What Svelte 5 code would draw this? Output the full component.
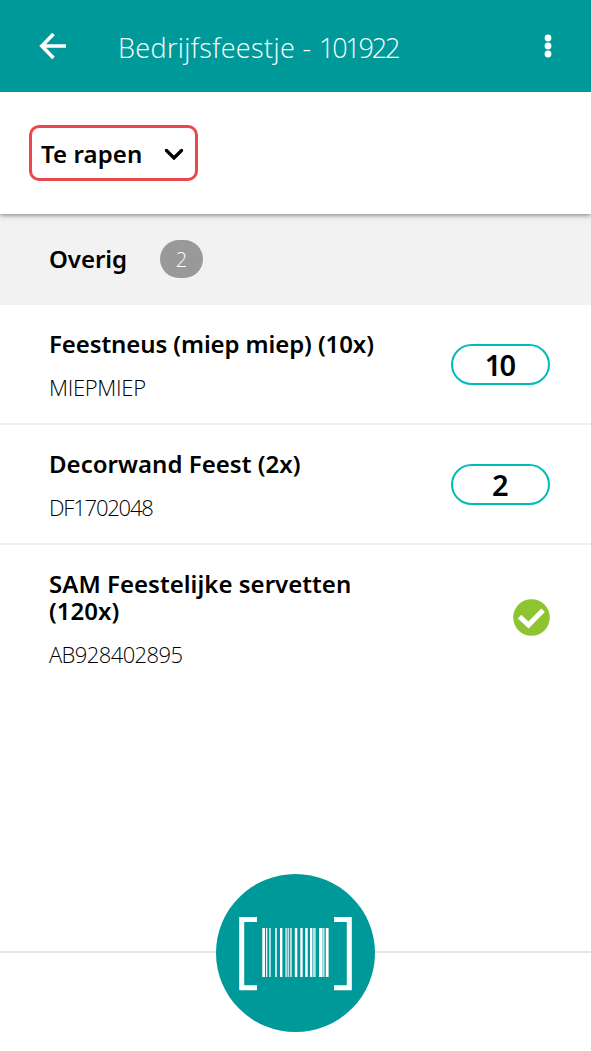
<script>
  let title = 'Bedrijfsfeestje -';
  let orderNumber = '101922';
  let filter = 'Te rapen';
  let group = { name: 'Overig', count: 2 };

  let items = [
    { name: 'Feestneus (miep miep) (10x)', code: 'MIEPMIEP', amount: 10, done: false, nameSpacing: -0.1, codeSpacing: -0.3 },
    { name: 'Decorwand Feest (2x)', code: 'DF1702048', amount: 2, done: false, nameSpacing: 0.03, codeSpacing: -1.2 },
    { name: 'SAM Feestelijke servetten (120x)', code: 'AB928402895', amount: 120, done: true, nameSpacing: 0.03, codeSpacing: -0.6 }
  ];

  // x, width, opacity of each bar
  const bars = [
    [262.3, 2.7, 1], [266, 1.3, 0.9], [269, 2, 0.65], [275, 2, 0.75],
    [280, 2.4, 1], [285.3, 1.6, 0.75], [287.6, 1.2, 0.9], [289.8, 2.2, 0.65],
    [294.8, 2.5, 1], [300.3, 2.4, 1], [305.3, 2.4, 1], [310, 2.4, 1],
    [313, 2.8, 0.7], [319, 3.6, 1], [323.2, 1.3, 0.9], [325.8, 2.8, 1]
  ];

  function toggleDone(index) {
    items[index].done = !items[index].done;
  }
</script>

<div class="screen">
  <header>
    <button class="back" aria-label="Terug">
      <svg width="28" height="28" viewBox="0 0 28 28">
        <path d="M14.5 2 2.8 14l11.7 12M3 14h24" fill="none" stroke="#fff" stroke-width="3.6" />
      </svg>
    </button>
    <h1>{title} <span class="number">{orderNumber}</span></h1>
    <button class="more" aria-label="Meer">
      <svg width="8" height="24" viewBox="0 0 8 24">
        <circle cx="4" cy="4" r="3.4" />
        <circle cx="4" cy="12" r="3.4" />
        <circle cx="4" cy="20" r="3.4" />
      </svg>
    </button>
  </header>

  <div class="filter">
    <button class="select">
      <span>{filter}</span>
      <svg width="20" height="14" viewBox="0 0 20 14">
        <path d="M2.5 4.5 10 12 17.5 4.5" fill="none" stroke="#000" stroke-width="3.3" stroke-linecap="round" />
      </svg>
    </button>
  </div>

  <div class="group">
    <h2>{group.name}</h2>
    <span class="badge">{group.count}</span>
  </div>

  <ul>
    {#each items as { name, code, amount, done, nameSpacing, codeSpacing }, index}
      <li>
        <div class="info">
          <h3 style="letter-spacing: {nameSpacing}px">{name}</h3>
          <p style="letter-spacing: {codeSpacing}px">{code}</p>
        </div>
        {#if done}
          <button class="check" aria-label="Gereed" on:click={() => toggleDone(index)}>
            <svg width="37" height="37" viewBox="0 0 37 37">
              <circle cx="18.5" cy="18.5" r="18.3" fill="#8dc42f" />
              <path d="M8.4 19.4 15.5 26 28.3 13" fill="none" stroke="#fff" stroke-width="5" stroke-linecap="square" />
            </svg>
          </button>
        {:else}
          <button class="amount" on:click={() => toggleDone(index)}>{amount}</button>
        {/if}
      </li>
    {/each}
  </ul>

  <footer>
    <button class="scan" aria-label="Scannen">
      <svg width="159" height="158" viewBox="216 874 159 158">
        <path d="M257 919.5H241.7V987.7H257M334 919.5H349.3V987.7H334" fill="none" stroke="#fff" stroke-width="5" />
        {#each bars as [x, width, opacity]}
          <rect {x} y="928" {width} height="49" {opacity} fill="#fff" />
        {/each}
      </svg>
    </button>
  </footer>
</div>

<style>
  :global(body) {
    margin: 0;
    background: #fff;
  }

  .screen {
    display: flex;
    flex-direction: column;
    width: 591px;
    height: 1051px;
    overflow: hidden;
    font-family: 'Noto Sans', sans-serif;
    color: #000;
  }

  h1, h2, h3, p, ul {
    margin: 0;
    padding: 0;
  }

  button {
    padding: 0;
    border: none;
    background: none;
    font-family: inherit;
    color: inherit;
    cursor: pointer;
  }

  svg {
    display: block;
  }

  header {
    display: flex;
    align-items: center;
    flex: none;
    position: relative;
    z-index: 2;
    box-sizing: border-box;
    height: 92px;
    padding: 0 39px;
    background: #009999;
    color: #fff;
  }

  h1 {
    flex: 1;
    margin: 3px 0 0 51px;
    font-family: 'Open Sans', sans-serif;
    font-size: 27px;
    font-weight: 300;
    line-height: 36px;
    letter-spacing: 0.37px;
    white-space: nowrap;
  }

  .number {
    letter-spacing: -2.2px;
  }

  .more svg {
    fill: #fff;
  }

  .filter {
    position: relative;
    z-index: 1;
    flex: none;
    box-sizing: border-box;
    height: 122px;
    padding: 33px 29px;
    background: #fff;
    box-shadow: 0 1px 5px rgba(0, 0, 0, 0.5);
  }

  .select {
    display: flex;
    align-items: center;
    justify-content: space-between;
    box-sizing: border-box;
    width: 169px;
    height: 56px;
    padding: 0 11px 0 9px;
    border: 3px solid #e9484c;
    border-radius: 10px;
    font-size: 24px;
    font-weight: 600;
    letter-spacing: 0.1px;
  }

  .group {
    display: flex;
    align-items: center;
    flex: none;
    box-sizing: border-box;
    height: 91px;
    padding: 0 0 2px 49px;
    background: #f2f2f2;
  }

  h2 {
    width: 111px;
    font-size: 24px;
    font-weight: 600;
    letter-spacing: -0.05px;
  }

  .badge {
    width: 43px;
    height: 38px;
    border-radius: 19px;
    background: #999;
    color: #fff;
    font-family: 'Open Sans', sans-serif;
    font-size: 20px;
    font-weight: 300;
    line-height: 39px;
    text-align: center;
  }

  ul {
    list-style-type: none;
  }

  li {
    display: flex;
    align-items: center;
    justify-content: space-between;
    padding: 25px 41px 24px 49px;
    border-bottom: 2px solid #f0f0f0;
  }

  li:last-child {
    border-bottom: none;
  }

  .info {
    width: 345px;
  }

  h3 {
    font-size: 24px;
    font-weight: 600;
    line-height: 27px;
  }

  p {
    margin-top: 18px;
    font-family: 'Open Sans', sans-serif;
    font-size: 22px;
    font-weight: 300;
    line-height: 24px;
  }

  .amount {
    box-sizing: border-box;
    width: 99px;
    height: 41px;
    padding-right: 2px;
    border: 2px solid #00bdb9;
    border-radius: 21px;
    font-size: 29px;
    font-weight: 600;
    line-height: 37px;
    letter-spacing: -1.8px;
  }

  .check {
    margin-bottom: 2px;
  }

  footer {
    display: flex;
    align-items: center;
    justify-content: center;
    flex: none;
    height: 158px;
    margin-top: auto;
    margin-bottom: 19px;
    background: linear-gradient(#e6e6e6, #e6e6e6) 0 77px / 100% 2px no-repeat;
  }

  .scan {
    width: 159px;
    height: 158px;
    border-radius: 50%;
    background: #009999;
  }
</style>
